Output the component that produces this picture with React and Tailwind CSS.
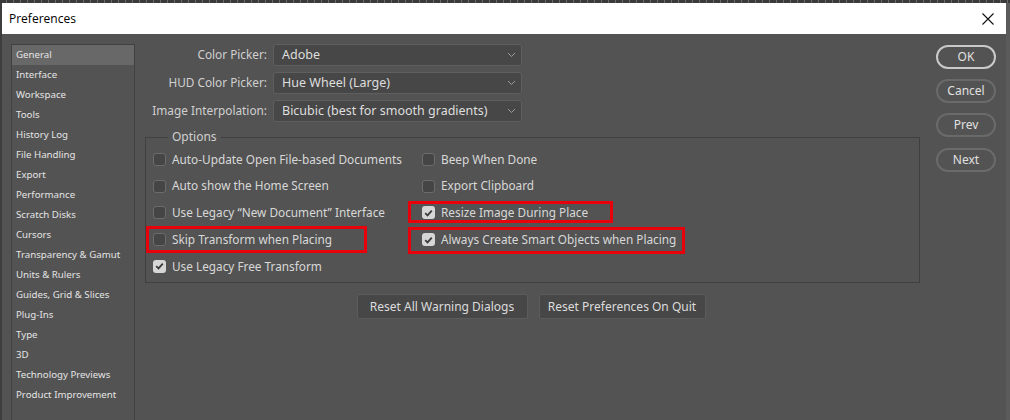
import React from 'react';

const sections = [
    'General', 'Interface', 'Workspace', 'Tools', 'History Log', 'File Handling', 'Export',
    'Performance', 'Scratch Disks', 'Cursors', 'Transparency & Gamut', 'Units & Rulers',
    'Guides, Grid & Slices', 'Plug-Ins', 'Type', '3D', 'Technology Previews', 'Product Improvement',
];

const font = { fontFamily: '"Noto Sans", "Open Sans", sans-serif' };

const Chevron = () => (
    <svg width="9" height="6" viewBox="0 0 9 6" className="shrink-0">
        <path d="M1 1 L4.5 4.5 L8 1" fill="none" stroke="#9c9c9c" strokeWidth="1" />
    </svg>
);

const Select = ({ value }) => (
    <div className="w-[249px] h-[22px] bg-[#474747] border border-[#5f5f5f] rounded-[3px] flex items-center justify-between pl-[8px] pr-[5px] text-[12.5px] text-[#dedede]">
        <span>{value}</span>
        <Chevron />
    </div>
);

const Checkbox = ({ checked }) =>
    checked ? (
        <span className="w-[13px] h-[13px] rounded-[3px] bg-[#d6d6d6] flex items-center justify-center shrink-0">
            <svg width="9" height="8" viewBox="0 0 9 8">
                <path d="M1.2 4.2 L3.5 6.4 L7.8 1.6" fill="none" stroke="#3b3b3b" strokeWidth="1.8" />
            </svg>
        </span>
    ) : (
        <span className="w-[13px] h-[13px] rounded-[3px] bg-[#454545] border border-[#6c6c6c] shrink-0" />
    );

// mark = classes of the red outline drawn over the row
const Option = ({ label, checked, mark }) => (
    <div className="relative h-[26.75px] flex items-center gap-[6px]">
        <Checkbox checked={checked} />
        <span className="text-[11.8px] text-[#d8d8d8] whitespace-nowrap">{label}</span>
        {mark && <span className={`absolute border-[3px] border-[#e8000b] ${mark}`} />}
    </div>
);

const RoundButton = ({ children, strong }) => (
    <button
        type="button"
        className={`w-[60px] h-[24px] rounded-full text-[12px] text-[#e0e0e0] flex items-center justify-center ${
            strong ? 'border-2 border-[#c9c9c9]' : 'border-2 border-[#6a6a6a]'
        }`}
    >
        {children}
    </button>
);

const FlatButton = ({ children, w }) => (
    <button
        type="button"
        className={`h-[25px] bg-[#474747] border border-[#5c5c5c] rounded-[2px] text-[12px] text-[#dcdcdc] ${w}`}
    >
        {children}
    </button>
);

export default function App() {
    return (
        <div className="w-[1010px] h-[420px] bg-[#535353] overflow-hidden flex flex-col" style={font}>
            {/* dotted strip above the window */}
            <div className="h-[3px] bg-[repeating-linear-gradient(90deg,#3a3a3a_0_6px,#6a6a6a_6px_7px)]" />
            <div className="flex flex-1 min-h-0">
                <div className="w-[1006px] flex flex-col border-l-[2px] border-[#3d3d3d]">
                    {/* title bar */}
                    <div className="h-[31px] bg-white flex items-center justify-between pl-[7px] pr-[12px]">
                        <span className="text-[12px] text-black" style={{ fontFamily: '"Open Sans", "Noto Sans", sans-serif' }}>
                            Preferences
                        </span>
                        <svg width="12" height="12" viewBox="0 0 12 12">
                            <path d="M0.5 0.5 L11.5 11.5 M11.5 0.5 L0.5 11.5" stroke="#111" strokeWidth="1.1" />
                        </svg>
                    </div>

                    <div className="flex flex-1 pt-[10px] pl-[9px]">
                        {/* section list */}
                        <div className="w-[124px] border border-[#414141] border-b-0 flex flex-col">
                            {sections.map((s, i) => (
                                <div
                                    key={s}
                                    className={`h-[20px] flex items-center pl-[4px] text-[9.7px] text-[#e4e4e4] ${
                                        i === 0 ? 'bg-[#686868]' : ''
                                    }`}
                                >
                                    {s}
                                </div>
                            ))}
                        </div>

                        {/* main panel */}
                        <div className="w-[775px] ml-[10px] flex flex-col">
                            <div className="grid grid-cols-[122px_249px] gap-x-[6px] gap-y-[6px]">
                                <div className="text-right text-[11.8px] text-[#d0d0d0] self-center">Color Picker:</div>
                                <Select value="Adobe" />
                                <div className="text-right text-[11.8px] text-[#d0d0d0] self-center">HUD Color Picker:</div>
                                <Select value="Hue Wheel (Large)" />
                                <div className="text-right text-[11.8px] text-[#d0d0d0] self-center">Image Interpolation:</div>
                                <Select value="Bicubic (best for smooth gradients)" />
                            </div>

                            <fieldset className="mt-[6px] border border-[#404040] h-[155px] pl-[7px]">
                                <legend className="ml-[15px] px-[4px] text-[12px] text-[#d0d0d0]">Options</legend>
                                <div className="flex">
                                    <div className="w-[269px] flex flex-col">
                                        <Option label="Auto-Update Open File-based Documents" />
                                        <Option label="Auto show the Home Screen" />
                                        <Option label={'Use Legacy \u201cNew Document\u201d Interface'} />
                                        <Option
                                            label="Skip Transform when Placing"
                                            mark="left-[-7px] top-0 w-[221px] h-[27px]"
                                        />
                                        <Option label="Use Legacy Free Transform" checked />
                                    </div>
                                    <div className="flex flex-col">
                                        <Option label="Beep When Done" />
                                        <Option label="Export Clipboard" />
                                        <Option
                                            label="Resize Image During Place"
                                            checked
                                            mark="left-[-14px] top-[1px] w-[205px] h-[22px]"
                                        />
                                        <Option
                                            label="Always Create Smart Objects when Placing"
                                            checked
                                            mark="left-[-14px] top-[1px] w-[277px] h-[27px]"
                                        />
                                    </div>
                                </div>
                            </fieldset>

                            <div className="mt-[11px] flex justify-center gap-[11px] pr-[3px]">
                                <FlatButton w="w-[171px]">Reset All Warning Dialogs</FlatButton>
                                <FlatButton w="w-[167px]">Reset Preferences On Quit</FlatButton>
                            </div>
                        </div>

                        {/* dialog buttons */}
                        <div className="ml-[16px] flex flex-col gap-[10px] pt-[1px]">
                            <RoundButton strong>OK</RoundButton>
                            <RoundButton>Cancel</RoundButton>
                            <RoundButton>Prev</RoundButton>
                            <div className="mt-[1px]">
                                <RoundButton>Next</RoundButton>
                            </div>
                        </div>
                    </div>
                </div>
                <div className="w-[4px] bg-[#5b5b5b]" />
            </div>
        </div>
    );
}
